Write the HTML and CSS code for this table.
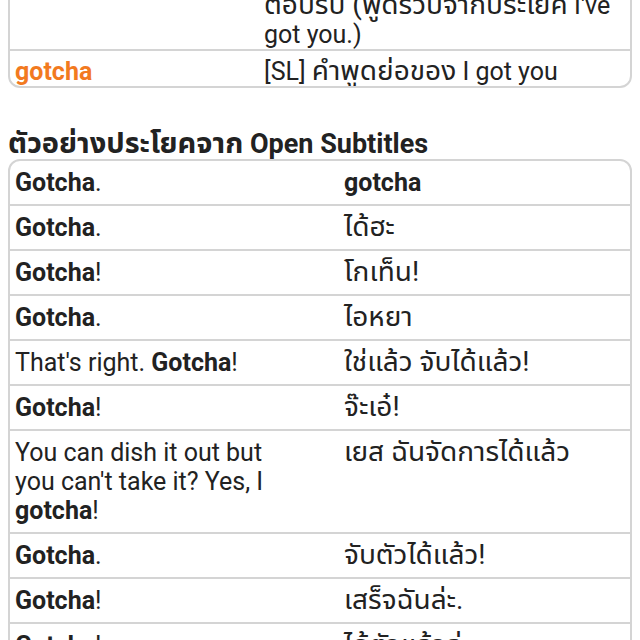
FILE: index.html
```html
<!DOCTYPE html>
<html lang="th">
<head>
<meta charset="utf-8">
<link rel="stylesheet" href="styles.css">
</head>
<body>
<div class="page">
  <div class="dict">
    <div class="drow">
      <div class="dc1"></div>
      <div class="dc2"><span class="th">ตอบรับ (พูดรวบจากประโยค</span> I've got you.)</div>
    </div>
    <div class="drow">
      <div class="dc1 hw">gotcha</div>
      <div class="dc2">[SL] <span class="th">คำพูดย่อของ</span> I got you</div>
    </div>
  </div>

  <h2 class="heading"><span class="th">ตัวอย่างประโยคจาก</span> Open Subtitles</h2>

  <div class="examples">
    <div class="erow"><div class="ec1"><b>Gotcha</b>.</div><div class="ec2"><b>gotcha</b></div></div>
    <div class="erow"><div class="ec1"><b>Gotcha</b>.</div><div class="ec2"><span class="th">ได้ฮะ</span></div></div>
    <div class="erow"><div class="ec1"><b>Gotcha</b>!</div><div class="ec2"><span class="th">โกเท็น!</span></div></div>
    <div class="erow"><div class="ec1"><b>Gotcha</b>.</div><div class="ec2"><span class="th">ไอหยา</span></div></div>
    <div class="erow"><div class="ec1">That's right. <b>Gotcha</b>!</div><div class="ec2"><span class="th">ใช่แล้ว จับได้แล้ว!</span></div></div>
    <div class="erow"><div class="ec1"><b>Gotcha</b>!</div><div class="ec2"><span class="th">จ๊ะเอ๋!</span></div></div>
    <div class="erow"><div class="ec1">You can dish it out but you can't take it? Yes, I <b>gotcha</b>!</div><div class="ec2"><span class="th">เยส ฉันจัดการได้แล้ว</span></div></div>
    <div class="erow"><div class="ec1"><b>Gotcha</b>.</div><div class="ec2"><span class="th">จับตัวได้แล้ว!</span></div></div>
    <div class="erow"><div class="ec1"><b>Gotcha</b>!</div><div class="ec2"><span class="th">เสร็จฉันล่ะ.</span></div></div>
    <div class="erow"><div class="ec1"><b>Gotcha</b>!</div><div class="ec2"><span class="th">ได้ตัวแล้วล่ะ</span></div></div>
  </div>
</div>
</body>
</html>
```

FILE: styles.css
```css
html, body {
  margin: 0;
  padding: 0;
  background: #ffffff;
}

body {
  font-family: Roboto, "Noto Sans Thai UI", "Noto Sans Thai", "Noto Sans", sans-serif;
  font-size: 25px;
  color: #222222;
  overflow: hidden;
}

.page {
  padding: 0 8px;
  margin-top: -17px;
}

b {
  font-weight: 700;
}

.th {
  font-size: 28px;
  line-height: 20px;
}

.dict {
  border: 2px solid #d4d4d4;
  border-radius: 12px;
  overflow: hidden;
}

.drow {
  display: grid;
  grid-template-columns: 249px 1fr;
  line-height: 29px;
}

.drow + .drow {
  border-top: 2px solid #d4d4d4;
}

.dc1, .dc2 {
  padding: 6px 4px 0 5px;
}

.hw {
  color: #f27a1f;
  font-weight: 700;
}

.heading {
  font-size: 27px;
  font-weight: 700;
  line-height: 29px;
  height: 29px;
  margin: 42px 0 0 0;
  color: #222222;
}

.heading .th {
  font-size: 29px;
}

.examples {
  border: 2px solid #d4d4d4;
  border-radius: 12px;
  overflow: hidden;
}

.erow {
  display: grid;
  grid-template-columns: 329px 1fr;
  line-height: 29px;
}

.erow + .erow {
  border-top: 2px solid #d4d4d4;
}

.ec1 {
  padding: 7px 40px 7px 5px;
}

.ec2 {
  padding: 7px 5px 7px 5px;
}
```
